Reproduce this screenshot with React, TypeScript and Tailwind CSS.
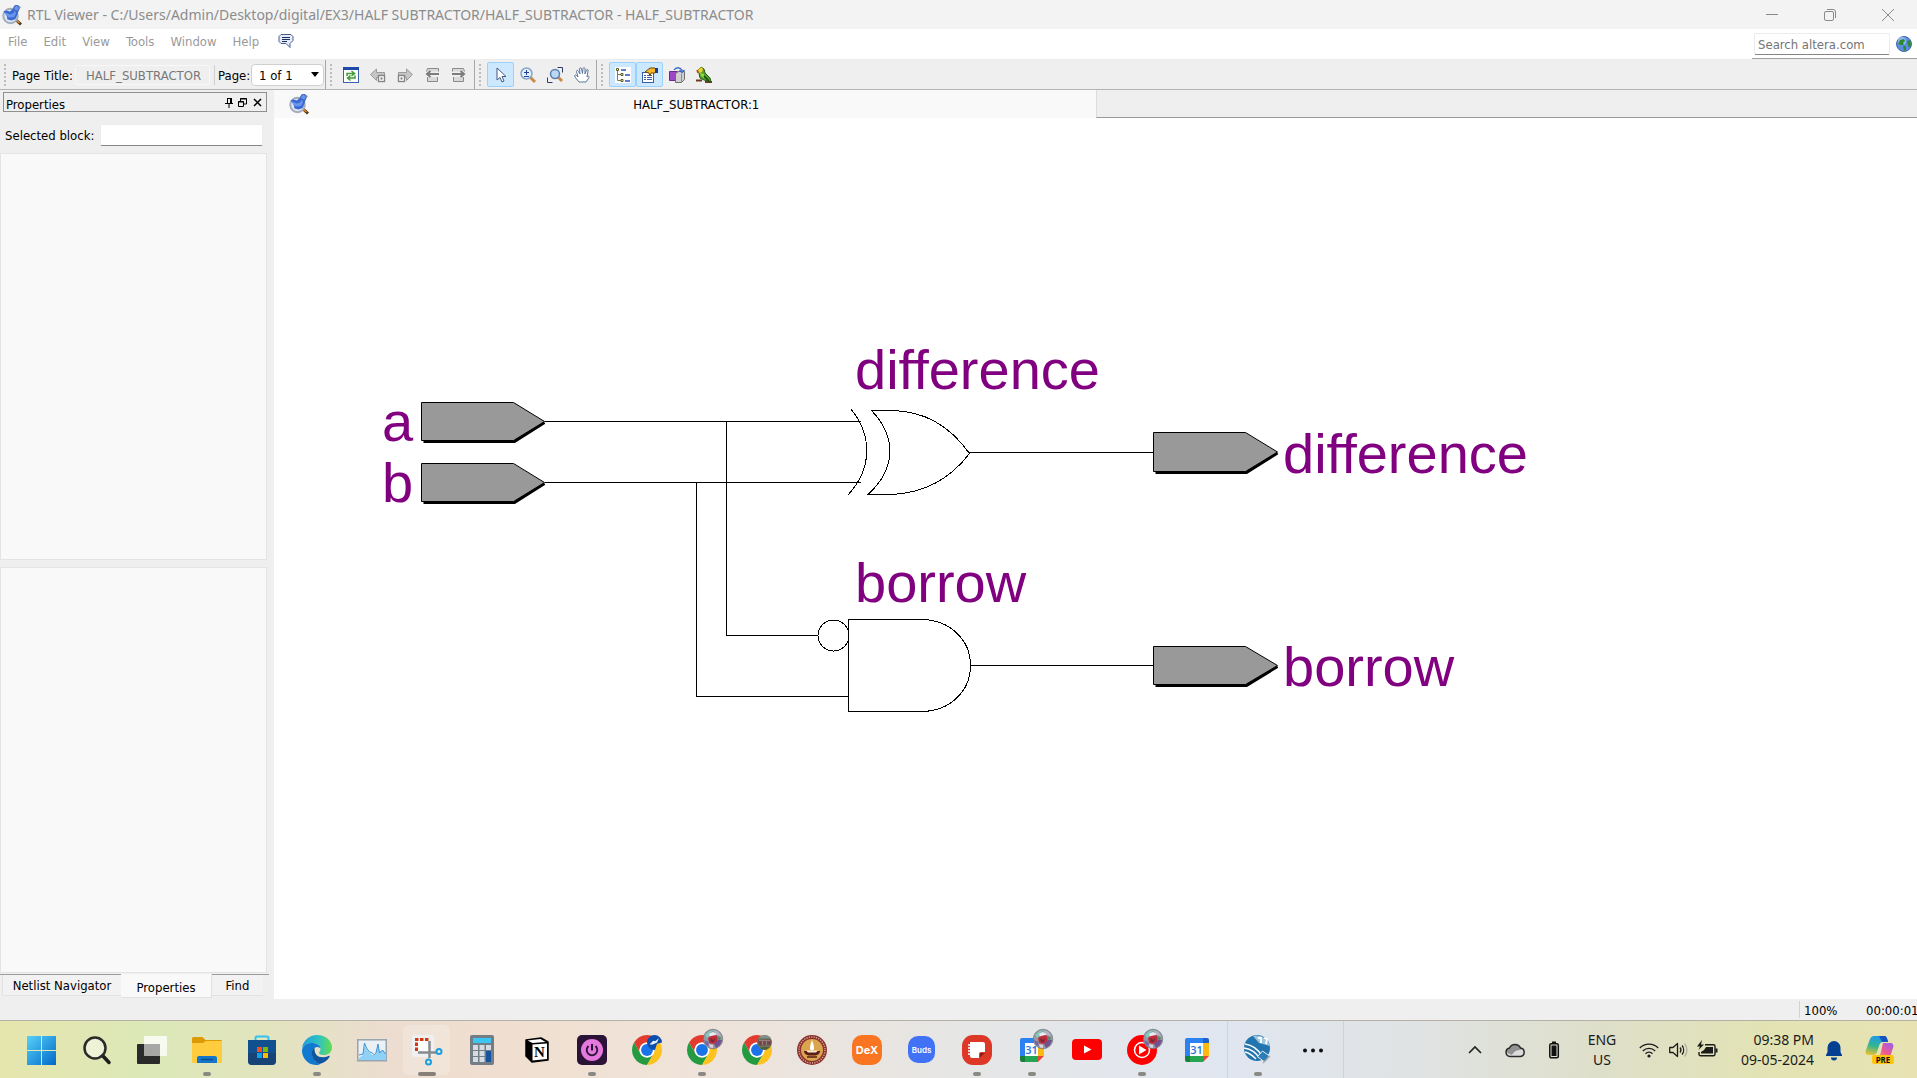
import React from 'react';

type Kids = { children: React.ReactNode };

/* ---------- small shared pieces ---------- */

function Icon({ size = 16, box = 16, children }: Kids & { size?: number; box?: number }) {
  return (
    <svg width={size} height={size} viewBox={`0 0 ${box} ${box}`} fill="none" aria-hidden="true" className="block shrink-0 overflow-visible">
      {children}
    </svg>
  );
}

function ViewerLogo() {
  return (
    <Icon size={20} box={20}>
      <path d="M14 15l5 4.500" stroke="#5a3510" strokeWidth="3" />
      <path d="M13.500 14.500l4 3.500" stroke="#d98a2b" strokeWidth="1.600" />
      <circle cx="8.500" cy="11" r="7.200" fill="#dfe6f1" stroke="#a3adbd" strokeWidth="2" />
      <path d="M1.500 6.500l3 3.500 1 4.500 4 1 4-1.500 2-4.500 1.500-5 1-2-2-2.500-3.500.500-1.500 3-3 3-4-1z" fill="#3a69d3" />
      <path d="M3 7.500l5 2 3-1 2-3 1 3-2 3.500-5 .500-3-2z" fill="#6a96ec" />
      <circle cx="14.500" cy="3.200" r="2.700" fill="#6b93e6" stroke="#4068c2" />
      <path d="M17 1.500l2.500.5-2.500 1.500z" fill="#7d8fae" />
    </Icon>
  );
}

function Grip() {
  return (
    <svg width="3" height="24" aria-hidden="true" className="block shrink-0">
      {[1, 5, 9, 13, 17, 21].map((y) => (
        <rect key={y} x="0" y={y} width="2" height="2" fill="#bdbdbd" />
      ))}
    </svg>
  );
}

function ToolButton({ label, active, children }: Kids & { label: string; active?: boolean }) {
  return (
    <button
      type="button"
      aria-label={label}
      className={
        active
          ? 'flex h-[25px] w-[27px] shrink-0 items-center justify-center rounded-xs border border-[#99d1ff] bg-[#cce8ff]'
          : 'flex h-[25px] w-[27px] shrink-0 items-center justify-center'
      }
    >
      {children}
    </button>
  );
}

/* ---------- window chrome ---------- */

function TitleBar() {
  return (
    <header className="flex h-[29px] shrink-0 items-center bg-[#f3f3f3] pl-[2px]">
      <ViewerLogo />
      <h1 className="ml-[5px] flex-1 font-['Noto_Sans',sans-serif] text-[14px] whitespace-nowrap text-[#8c8c8c]">
        RTL Viewer - C:/Users/Admin/Desktop/digital/EX3/HALF SUBTRACTOR/HALF_SUBTRACTOR - HALF_SUBTRACTOR
      </h1>
      <div className="flex text-[#8a8a8a]">
        <button type="button" aria-label="Minimize" className="flex h-7 w-[58px] items-center justify-center">
          <Icon size={12} box={12}><path d="M0 5.500h12" stroke="currentColor" /></Icon>
        </button>
        <button type="button" aria-label="Restore" className="flex h-7 w-[58px] items-center justify-center">
          <Icon size={12} box={12}>
            <rect x="0.500" y="2.500" width="9" height="9" rx="1.500" stroke="currentColor" />
            <path d="M3 .5h6a2.500 2.500 0 0 1 2.500 2.500v6" stroke="currentColor" />
          </Icon>
        </button>
        <button type="button" aria-label="Close" className="flex h-7 w-[58px] items-center justify-center">
          <Icon size={12} box={12}><path d="M0 0l12 12M12 0L0 12" stroke="currentColor" /></Icon>
        </button>
      </div>
    </header>
  );
}

function MenuBar() {
  return (
    <div className="flex h-[31px] shrink-0 border-b border-[#ececec] bg-white">
      <nav className="flex h-[26px] flex-1 items-center gap-4 pl-2 text-[#9a9a9a]">
        {['File', 'Edit', 'View', 'Tools', 'Window', 'Help'].map((m) => (
          <button key={m} type="button">{m}</button>
        ))}
        <button type="button" aria-label="Feedback" className="ml-[3px] pb-[2px]">
          <Icon>
            <path d="M3 1.500h10l2 2v4l-3 3v4l-4-4H3l-2-2v-5z" fill="#e4ecfb" stroke="#4a5f8a" />
            <path d="M4 4.500h8M4 6.500h8M4 8.500h5" stroke="#1f2f5a" />
          </Icon>
        </button>
      </nav>
      <div className="flex h-[30px] w-[165px] items-center gap-[6px] border-b border-[#a0a0a0] pl-[2px]">
        <input
          aria-label="Search altera.com"
          placeholder="Search altera.com"
          className="h-[22px] w-[136px] rounded-xs border border-[#ececec] border-b-[#868686] bg-white px-[3px] pt-[2px] outline-none placeholder:text-[#757575]"
        />
        <button type="button" aria-label="Search the web">
          <Icon>
            <circle cx="8" cy="8" r="7.500" fill="#5b8ee0" stroke="#4468b0" />
            <circle cx="6" cy="5" r="4" fill="#a9c8f6" opacity=".7" />
            <path d="M2 8l2-4 4-1 1 2-2 2 1 2-3 0zM7 10l3 0 0 4-2 1zM11 5l3-1 1 4-1 4-2-2z" fill="#2f8a2e" />
          </Icon>
        </button>
      </div>
    </div>
  );
}

function ToolBar() {
  return (
    <div className="flex h-[30px] shrink-0 items-stretch border-b border-[#b4b4b4] bg-[#efefef] text-black">
      <div className="flex w-[326px] shrink-0 items-center border-r border-[#a8a8a8] pl-1">
        <Grip />
        <label htmlFor="page-title" className="ml-[5px] w-[63px] pt-[2px] whitespace-nowrap">Page Title:</label>
        <input
          id="page-title"
          readOnly
          value="HALF_SUBTRACTOR"
          className="h-5 w-[135px] min-w-0 rounded-xs border border-[#f8f8f8] bg-transparent pt-[2px] pl-[10px] text-[#787878] outline-none"
        />
        <span className="ml-1 h-5 w-px bg-[#cfcfcf]" />
        <label htmlFor="page" className="ml-[3px] w-[33px] pt-[2px] whitespace-nowrap">Page:</label>
        <span className="relative">
          <select id="page" className="block h-[22px] w-[73px] appearance-none rounded-sm border border-[#d0d0d0] bg-white pt-[2px] pl-[7px] outline-none">
            <option>1 of 1</option>
          </select>
          <span className="pointer-events-none absolute top-[8px] right-[5px]">
            <svg width="8" height="5" aria-hidden="true" className="block"><path d="M0 0h8L4 5z" fill="#000" /></svg>
          </span>
        </span>
      </div>

      <div className="flex w-[149px] shrink-0 items-center border-r border-[#a8a8a8] pl-1">
        <Grip />
        <div className="ml-1 flex w-full items-center">
          <ToolButton label="Refresh">
            <Icon>
              <rect x="0.500" y="0.500" width="15" height="15" fill="#fff" stroke="#3a62ad" />
              <path d="M0 0h16v3H0z" fill="#1d4aa8" />
              <path d="M4 9V6.500h7M8.500 4l3 2.500-3 2.500M12 8.500V11H5M7.500 8.500L4.500 11l3 2.500" stroke="#3f9c35" strokeWidth="1.500" />
            </Icon>
          </ToolButton>
          <ToolButton label="Back">
            <Icon>
              <path d="M0.500 7.500l6-5.500v3.500h8v5h-8v3z" fill="#c6c6c6" stroke="#9b9b9b" />
              <rect x="8.500" y="8.500" width="6" height="6" fill="#fff" stroke="#858585" strokeWidth="1.400" />
              <path d="M10.500 10.500h2v2h-2z" fill="#777" />
            </Icon>
          </ToolButton>
          <ToolButton label="Forward">
            <Icon>
              <path d="M15.500 7.500L9.500 2v3.500h-8v5h8v3z" fill="#c6c6c6" stroke="#9b9b9b" />
              <rect x="1.500" y="8.500" width="6" height="6" fill="#fff" stroke="#858585" strokeWidth="1.400" />
              <path d="M3.500 10.500h2v2h-2z" fill="#777" />
            </Icon>
          </ToolButton>
          <ToolButton label="Previous page">
            <Icon>
              <path d="M2.500 4.500l1-3h11v3M3.500 10v4.500h10V10" fill="#d9d9d9" stroke="#8b8b8b" />
              <path d="M15 7H4M6.500 4L3 7l3.500 3" stroke="#7c7c7c" strokeWidth="2" />
            </Icon>
          </ToolButton>
          <ToolButton label="Next page">
            <Icon>
              <path d="M1.500 4.500v-3h11l1 3M2.500 10v4.500h10V10" fill="#d9d9d9" stroke="#8b8b8b" />
              <path d="M1 7h11M9.500 4L13 7l-3.500 3" stroke="#7c7c7c" strokeWidth="2" />
            </Icon>
          </ToolButton>
        </div>
      </div>

      <div className="flex w-[122px] shrink-0 items-center border-r border-[#a8a8a8] pl-1">
        <Grip />
        <div className="ml-[5px] flex">
          <ToolButton label="Select" active>
            <Icon>
              <path d="M4 1v12l3-2.500 2 4.500 2-1-2-4.500h4z" fill="#fff" stroke="#44597c" />
            </Icon>
          </ToolButton>
          <ToolButton label="Zoom">
            <Icon>
              <path d="M10 10l5 5" stroke="#c98b45" strokeWidth="3" />
              <circle cx="6.500" cy="6.500" r="5.500" fill="#e3eefb" stroke="#86a3cc" strokeWidth="1.500" />
              <path d="M4 5.500h5M6.500 3v5M4 9.500h5" stroke="#1d3f9a" />
            </Icon>
          </ToolButton>
          <ToolButton label="Fit in window">
            <Icon>
              <path d="M10.500.5h5v5M.5 10.500v5h5" stroke="#2b3f66" />
              <path d="M11 10l4 4" stroke="#c98b45" strokeWidth="3" />
              <circle cx="8" cy="7" r="4.500" fill="#bcd6f5" stroke="#5f7fae" strokeWidth="1.500" />
            </Icon>
          </ToolButton>
          <ToolButton label="Pan">
            <Icon>
              <path d="M5 15l-4-5c-1-2 .5-2.500 1.500-1.500L4 10 2.500 4.500c0-1.500 1.500-1.500 2 0L6 7 5.500 2c0-1.500 2-1.500 2 0L8.500 6.500 9 1.500c.5-1.500 2-1 2 .5V7l1.500-4c.5-1 2-.5 1.500 1l-1 6c1-1 2.500-1 2 .5L12 15z" fill="#fff" stroke="#5d779f" />
            </Icon>
          </ToolButton>
        </div>
      </div>

      <div className="flex items-center pl-1">
        <Grip />
        <div className="ml-[5px] flex">
          <ToolButton label="Netlist navigator" active>
            <Icon>
              <path d="M0 0h16v16H0z" fill="#fff" />
              <path d="M2.500 3v10.500H6M2.500 7.500H6" stroke="#7c7c4c" />
              <path d="M1.500 1.500h2v2h-2zM6 6.500h2v2H6zM6 12.500h2v2H6z" fill="#ffd" stroke="#5a5a20" />
              <path d="M6 3h5M10 8h5M10 14h5" stroke="#2c4fc4" strokeWidth="1.500" />
            </Icon>
          </ToolButton>
          <ToolButton label="Properties" active>
            <Icon>
              <rect x="0.500" y="5.500" width="11" height="10" fill="#fff" stroke="#3d5ca8" />
              <path d="M2 8.500h2M5 8.500h5M2 10.500h2M5 10.500h5M2 12.500h2M5 12.500h5" stroke="#3d5ca8" />
              <path d="M3 5l5-4h5l2 2-2 3-4 0-1 3-1-3z" fill="#f5b82a" stroke="#6b4a05" />
              <path d="M13 1h3v5h-3z" fill="#173c8f" />
            </Icon>
          </ToolButton>
          <ToolButton label="Color settings">
            <Icon>
              <path d="M.5 4.500h8v9h-8z" fill="#a048c4" stroke="#6a2a8a" />
              <path d="M6.500 6.500l3-2h6v8l-3 3h-6z" fill="#cfcfcf" stroke="#6e6e6e" />
              <path d="M12.500 7v8" stroke="#8e8e8e" />
              <path d="M5 3c2-3 6-3 8 0v2M10.500 3L13 5.500 15.500 3" stroke="#3a67c8" strokeWidth="1.300" />
            </Icon>
          </ToolButton>
          <ToolButton label="Bird's eye view">
            <Icon>
              <path d="M0 13.500h6M9 15h7" stroke="#6b3b20" strokeWidth="2" />
              <path d="M2 3l3-3 3 2 1 4 5 5 1 4-3-1-4-1-4-2-1-5z" fill="#4fa52f" stroke="#245c14" />
              <path d="M2 3l3-3 2 2-1 3-3 1z" fill="#f5d02d" />
              <path d="M4 6l4 1 0 4-3-2z" fill="#9bd33a" />
              <path d="M8 9l5 5" stroke="#1c4310" strokeWidth="1.500" />
              <path d="M1 3l1 3" stroke="#d23c1e" strokeWidth="1.500" />
            </Icon>
          </ToolButton>
        </div>
      </div>
    </div>
  );
}

/* ---------- side panel ---------- */

function PropertiesPanel() {
  return (
    <aside className="flex w-[274px] shrink-0 flex-col bg-[#efefef]">
      <div className="mt-[2px] ml-[3px] flex h-5 w-[264px] shrink-0 items-center border border-[#8f8f8f] pr-1 pl-[2px]">
        <h2 className="flex-1 pt-[6px]">Properties</h2>
        <div className="flex gap-[5px]">
          <button type="button" aria-label="Pin">
            <Icon size={8} box={8}><path d="M2.500 0v5M2 .5h5M0 5.500h8M5.500 0v5M6.500 0v5M4 6v4" stroke="#000" /></Icon>
          </button>
          <button type="button" aria-label="Float">
            <Icon size={9} box={9}>
              <path d="M2.500 3V.5h6V6H6M2 1h7" stroke="#000" />
              <path d="M.5 3.500h5v5h-5zM0 4h6" stroke="#000" />
            </Icon>
          </button>
          <button type="button" aria-label="Close panel" className="ml-px">
            <Icon size={9} box={9}><path d="M1 1l7 7M8 1L1 8" stroke="#000" strokeWidth="1.500" /></Icon>
          </button>
        </div>
      </div>
      <div className="mt-3 flex h-[22px] shrink-0 items-center pr-[11px] pl-[5px]">
        <label htmlFor="selected-block" className="w-[95px] pt-[2px] whitespace-nowrap">Selected block:</label>
        <input id="selected-block" className="h-[22px] min-w-0 flex-1 rounded-xs border border-[#ececec] border-b-[#868686] bg-white px-1 outline-none" />
      </div>
      <div className="mt-[7px] mr-[7px] flex-1 border border-[#e4e4e4] bg-[#f9f9f9]" />
      <div className="mt-[7px] mr-[7px] flex-1 border border-[#e4e4e4] bg-[#f9f9f9]" />
      <div role="tablist" className="mt-px mr-[5px] mb-px flex h-6 shrink-0 items-start border-t border-[#9c9c9c]">
        <button role="tab" type="button" aria-selected="false" className="ml-[2px] h-[21px] w-[119px] border-b border-l border-[#e2e2e2] bg-[#f2f2f2] pt-[2px]">Netlist Navigator</button>
        <button role="tab" type="button" aria-selected="true" className="-mt-px h-[24px] w-[91px] border-r border-b border-[#e2e2e2] bg-[#f9f9f9] pt-1">Properties</button>
        <button role="tab" type="button" aria-selected="false" className="h-[21px] w-[51px] border-b border-[#e2e2e2] bg-[#f2f2f2] pt-[2px]">Find</button>
      </div>
    </aside>
  );
}

/* ---------- schematic ---------- */

function Pin({ x, y, w, h }: { x: number; y: number; w: number; h: number }) {
  const shoulder = Math.round(w * 0.745);
  const mid = h / 2;
  return (
    <g transform={`translate(${x} ${y})`}>
      <path d={`M2 ${h + 1}H${shoulder + 1}L${w} ${mid + 1}`} fill="none" stroke="#000" strokeWidth="3" />
      <path d={`M0 0H${shoulder}L${w} ${mid}L${shoulder} ${h}H0Z`} fill="#999" stroke="#000" />
    </g>
  );
}

function Schematic() {
  return (
    <svg role="img" aria-label="Half subtractor schematic" className="block h-full w-full bg-white">
      <g stroke="#000" fill="none" shapeRendering="crispEdges">
        <path d="M271 303.500H587M271 364.500H587M452.500 303V517.500H544M422.500 364V578.500H574M695 334.500H879M696 547.500H879" />
      </g>
      <g stroke="#000" fill="none" shapeRendering="crispEdges">
        <path d="M577 291C598 317 599 350 574 377" />
        <path d="M597.500 292.500C622 318 623 350 594 376.500H618C650 375 676 361 695.500 335.500C676 308 650 293 618 292.500Z" />
        <path d="M574.500 501.500H647C676 501.500 696.500 522 696.500 547.500S676 593.500 647 593.500H574.500Z" />
        <circle cx="559.500" cy="517.500" r="15.500" />
      </g>
      <Pin x={147.500} y={284.500} w={123} h={38} />
      <Pin x={147.500} y={345.500} w={123} h={38} />
      <Pin x={879.500} y={314.500} w={124} h={39} />
      <Pin x={879.500} y={528.500} w={124} h={38} />
      <g fill="#800080" fontFamily="'Liberation Sans', Arial, sans-serif" fontSize="56">
        <text x="108" y="323">a</text>
        <text x="108" y="384">b</text>
        <text x="581" y="271">difference</text>
        <text x="581" y="484">borrow</text>
        <text x="1009" y="355">difference</text>
        <text x="1009" y="568">borrow</text>
      </g>
    </svg>
  );
}

function Workspace() {
  return (
    <main className="flex min-w-0 flex-1 flex-col">
      <div role="tablist" className="flex h-[28px] shrink-0">
        <button role="tab" type="button" aria-selected="true" className="flex w-1/2 items-center bg-[#f9f9f9] pr-3 pb-px pl-[15px]">
          <ViewerLogo />
          <span className="flex-1 pt-[3px]">HALF_SUBTRACTOR:1</span>
        </button>
        <div className="flex-1 border-b border-l border-[#999] border-l-[#dcdcdc] bg-[#efefef]" />
      </div>
      <div className="min-h-0 flex-1">
        <Schematic />
      </div>
    </main>
  );
}

function StatusBar() {
  return (
    <div className="flex h-[21px] shrink-0 items-center justify-end bg-[#efefef] whitespace-nowrap">
      <span className="flex h-[17px] w-[67px] items-center border-l border-[#d2d2d2] pt-[2px] pl-1">100%</span>
      <span className="w-[51px] pt-[2px]">00:00:01</span>
    </div>
  );
}

/* ---------- taskbar ---------- */

function Chrome({ children }: { children?: React.ReactNode }) {
  return (
    <Icon size={30} box={48}>
      <path d="M24 12h20.780A24 24 0 0 0 3.220 12L13.600 30A12 12 0 0 1 24 12z" fill="#e33b2e" />
      <path d="M3.220 12A24 24 0 0 0 24 48L34.390 30A12 12 0 0 1 13.600 30z" fill="#249a41" />
      <path d="M44.780 12A24 24 0 0 1 24 48L34.390 30A12 12 0 0 0 24 12z" fill="#fcc31e" />
      <circle cx="24" cy="24" r="12" fill="#fff" />
      <circle cx="24" cy="24" r="9.500" fill="#1a73e8" />
      {children}
    </Icon>
  );
}

/* Profile picture shown over an app icon; drawn in a 30-unit box. */
function Avatar() {
  return (
    <g>
      <circle cx="26" cy="4" r="9.800" fill="#8f9aa3" stroke="#666c70" strokeWidth=".6" />
      <path d="M18 0l4-4 4-1-2 5-4 3z" fill="#86c4ba" />
      <path d="M26-5l5 1.500L34.500 1l-5-1z" fill="#b9b3c4" />
      <path d="M22-1l4-2 3 1.500v2l-6 1z" fill="#e9edf0" />
      <path d="M21 3l3-2 5-1 2 3-1 5-4 1-4-1z" fill="#c42a38" />
      <path d="M23 3l3 2 2-2-1 4-3 0z" fill="#5d3340" />
      <path d="M17 5l4 2 1 4-3-1z" fill="#7d5fa0" />
      <path d="M27 9l4-4 4 0-2 5-4 3z" fill="#72508f" />
      <path d="M22 9l4 1 0 3-3-.5z" fill="#d9cfdd" />
      <path d="M30 1l4 2-1 2-3-1z" fill="#5e7f68" />
    </g>
  );
}

function Calendar({ children }: { children?: React.ReactNode }) {
  return (
    <Icon size={30} box={30}>
      <path d="M3 5a2 2 0 0 1 2-2h16v5H8v13H3z" fill="#2c82f0" />
      <path d="M21 3h4a2 2 0 0 1 2 2v3h-6z" fill="#1c62cf" />
      <path d="M21 8h6v13h-6z" fill="#fbb912" />
      <path d="M3 21h5v6H5a2 2 0 0 1-2-2z" fill="#17803c" />
      <path d="M8 21h13v6H8z" fill="#24a550" />
      <path d="M21 21h6l-6 6z" fill="#ea4535" />
      <path d="M8 8h13v13H8z" fill="#fff" />
      <text x="14.500" y="19" textAnchor="middle" fontSize="11" fontWeight="600" fontFamily="'Open Sans', sans-serif" fill="#2673e0">31</text>
      {children}
    </Icon>
  );
}

const apps: { name: string; run?: boolean; focus?: boolean; icon: React.ReactNode }[] = [
  {
    name: 'Start',
    icon: (
      <Icon size={30} box={30}>
        <defs>
          <linearGradient id="win" x1="0" y1="0" x2="30" y2="30" gradientUnits="userSpaceOnUse">
            <stop stopColor="#57d3fa" /><stop offset="1" stopColor="#0067c8" />
          </linearGradient>
        </defs>
        <path d="M0 1h14v14H0zM15 1h14v14H15zM0 16h14v14H0zM15 16h14v14H15z" fill="url(#win)" />
      </Icon>
    ),
  },
  {
    name: 'Search',
    icon: (
      <Icon size={30} box={30}>
        <path d="M20.500 20.500l6.500 7" stroke="#1d1d1d" strokeWidth="3.500" strokeLinecap="round" />
        <circle cx="13" cy="13" r="10.500" fill="#fff" fillOpacity=".45" stroke="#2a2a2a" strokeWidth="2.500" />
      </Icon>
    ),
  },
  {
    name: 'Task view',
    icon: (
      <Icon size={30} box={30}>
        <rect x="0" y="9" width="23" height="20" rx="1" fill="#2a2a2a" />
        <rect x="7" y="1" width="23" height="20" rx="1" fill="#fff" fillOpacity=".78" />
        <path d="M7 9h16v12H8a1 1 0 0 1-1-1z" fill="#8c8c88" fillOpacity=".6" />
      </Icon>
    ),
  },
  {
    name: 'File Explorer',
    run: true,
    icon: (
      <Icon size={30} box={30}>
        <path d="M0 3.500A1.500 1.500 0 0 1 1.500 2h9l3 3H29a1 1 0 0 1 1 1v5H0z" fill="#dd9a06" />
        <path d="M0 8h11l3-2h16v21a1 1 0 0 1-1 1H1a1 1 0 0 1-1-1z" fill="#ffcc3d" />
        <path d="M5 28v-5a2 2 0 0 1 2-2h16a2 2 0 0 1 2 2v5z" fill="#1577c9" />
        <path d="M9 24.500h12" stroke="#0b4e8e" strokeWidth="1.500" />
      </Icon>
    ),
  },
  {
    name: 'Microsoft Store',
    icon: (
      <Icon size={30} box={30}>
        <path d="M8.500 6V3A1.500 1.500 0 0 1 10 1.500h10A1.500 1.500 0 0 1 21.500 3v3" stroke="#2ec3f4" strokeWidth="2" />
        <path d="M1 5h28v21a4 4 0 0 1-4 4H5a4 4 0 0 1-4-4z" fill="#10508f" />
        <path d="M1 18h28v8a4 4 0 0 1-4 4H5a4 4 0 0 1-4-4z" fill="#1d3a68" opacity=".6" />
        <path d="M10 12h5v5h-5z" fill="#f25022" /><path d="M16 12h5v5h-5z" fill="#7fba00" />
        <path d="M10 18h5v5h-5z" fill="#00a4ef" /><path d="M16 18h5v5h-5z" fill="#ffb900" />
      </Icon>
    ),
  },
  {
    name: 'Microsoft Edge',
    run: true,
    icon: (
      <Icon size={30} box={30}>
        <defs>
          <linearGradient id="edgeTop" x1="0" y1="10" x2="30" y2="12" gradientUnits="userSpaceOnUse">
            <stop stopColor="#1d9fe0" /><stop offset=".55" stopColor="#2fc3c0" /><stop offset="1" stopColor="#66dc4e" />
          </linearGradient>
        </defs>
        <path d="M0 14A15 15 0 0 1 15 0c9 0 15 6 15 12.500 0 5-4 7.500-8 7.500-3 0-5-1-5-2s1.500-1.500 1.500-4C18.500 10.500 15 8 11 8 5 8 1 11 0 14z" fill="url(#edgeTop)" />
        <path d="M0 15C1 10.500 5 8 10 8c5 0 8.500 2.500 8.500 6 0-1-1.500-2-3-2-4 0-6.500 4-5 9 1 4 4 7 8 8-2 1-3.500 1-5 1A14.500 14.500 0 0 1 0 15z" fill="#1279d0" />
        <path d="M12.500 12.500c-5 3-3 13.500 5 16.500 4-1 8-3.500 10-7 .5-1-.3-1.500-1-1-5 2.500-11 1.500-13-2.500-1-2-1-4-1-6z" fill="#0f559f" />
      </Icon>
    ),
  },
  {
    name: 'Resource Monitor',
    icon: (
      <Icon size={30} box={30}>
        <rect x="0.750" y="4.750" width="28.500" height="21" fill="#eaf0f4" stroke="#98a4ae" strokeWidth="1.500" />
        <path d="M2 23l4-3 1.500-9 2 3 2 3 4 3 2 0 1.500 0L21 9l1.500 8 3-2 3 4v6H2z" fill="#8fd0f7" />
        <path d="M2 20l4-1 1.500-11 2 5 3 4 3 1 2 2 1.500-2L21 9l1.500 9 3-3 3 4" stroke="#3b93d2" />
      </Icon>
    ),
  },
  {
    name: 'Snipping Tool',
    run: true,
    focus: true,
    icon: (
      <Icon size={30} box={30}>
        <rect x="0" y="0" width="22" height="22" rx="2" fill="#eef0f2" />
        <path d="M4.500 16V4.500H18" stroke="#cf3a12" strokeWidth="3" strokeDasharray="3.500 1.500" />
        <path d="M6 6h11v11H6z" fill="#fff" />
        <path d="M17.500 6v17M6 17.500h18" stroke="#868b8f" strokeWidth="2.500" />
        <circle cx="27" cy="16.500" r="2.500" stroke="#189fe0" strokeWidth="2" />
        <circle cx="16.500" cy="27" r="2.500" stroke="#189fe0" strokeWidth="2" />
      </Icon>
    ),
  },
  {
    name: 'Calculator',
    icon: (
      <Icon size={30} box={30}>
        <rect x="3" y="0" width="24" height="30" rx="2" fill="#737d86" />
        <path d="M6 3h18v5H6z" fill="#3cc7f3" />
        <path d="M6 10h5v5H6zM12.500 10h5v5h-5zM19 10h5v5h-5zM6 16h5v5H6zM12.500 16h5v5h-5zM6 22h5v5H6zM12.500 22h5v5h-5z" fill="#d5dbe0" />
        <path d="M19 16h5v11h-5z" fill="#1553a0" />
      </Icon>
    ),
  },
  {
    name: 'Notion',
    icon: (
      <Icon size={30} box={30}>
        <path d="M4 5l15-2 7 4v18l-16 2-6-6z" fill="#000" stroke="#000" strokeWidth="1.500" strokeLinejoin="round" />
        <path d="M5.500 5.500l13-1.500 5 3-13 1z" fill="#fff" />
        <path d="M10.500 9.500l14.500-1v15.500l-14.500 1.500z" fill="#fff" />
        <text x="17.500" y="22" textAnchor="middle" fontSize="15" fontWeight="700" fontFamily="'Liberation Serif', serif" fill="#000">N</text>
      </Icon>
    ),
  },
  {
    name: 'Power',
    run: true,
    icon: (
      <Icon size={30} box={30}>
        <rect width="30" height="30" rx="5" fill="#2b1338" />
        <circle cx="15" cy="15" r="11" fill="#e478dc" />
        <path d="M15 9v6.500" stroke="#2b1338" strokeWidth="2" />
        <path d="M11.500 11a5.300 5.300 0 1 0 7 0" stroke="#2b1338" strokeWidth="1.800" />
      </Icon>
    ),
  },
  {
    name: 'Chrome profile 1',
    icon: (
      <Chrome>
        <path d="M24 12a12 12 0 0 1 24 0l-8 2-3 9-1 1a12 12 0 0 1-12-12z" fill="#0b4fae" />
        <path d="M28 15l6-6 3 1 6-5-3 7-7 3z" fill="#e8f0fa" />
      </Chrome>
    ),
  },
  { name: 'Chrome profile 2', run: true, icon: <Chrome><g transform="scale(1.6)"><Avatar /></g></Chrome> },
  {
    name: 'Chrome profile 3',
    icon: (
      <Chrome>
        <circle cx="36" cy="12" r="12" fill="#6d7560" />
        <path d="M26 5c5-6 16-6 20 0z" fill="#7f918a" />
        <path d="M26 8l20-1v9l-19 1z" fill="#74454a" />
        <path d="M27 9h18M33 10v6M39 10v6" stroke="#a08c88" strokeWidth="1.500" />
        <path d="M28 20l16-1-5 4h-6z" fill="#4d5d3c" />
      </Chrome>
    ),
  },
  {
    name: 'Institute portal',
    icon: (
      <Icon size={30} box={30}>
        <circle cx="15" cy="15" r="15" fill="#8a2f2a" />
        <circle cx="15" cy="15" r="13" stroke="#d6a69c" strokeWidth="1.500" strokeDasharray="1.200 1.200" />
        <circle cx="15" cy="15" r="11" fill="#dba54d" />
        <path d="M7 16h16c0 3-3 4.500-6 4.500H13c-3 0-6-1.500-6-4.500z" fill="#5d1b19" />
        <path d="M9 15.500h12l-2 2h-8z" fill="#f7ead2" />
        <path d="M10 22h10" stroke="#5d1b19" strokeWidth="1.500" />
        <path d="M15 5c1.500 4 2 6 2 8.500a2 2 0 0 1-4 0c0-2.500.5-4.500 2-8.500z" fill="#fff" />
      </Icon>
    ),
  },
  {
    name: 'Samsung DeX',
    icon: (
      <Icon size={30} box={30}>
        <rect width="30" height="30" rx="10" fill="#f97521" />
        <text x="15" y="19" textAnchor="middle" fontSize="11" fontWeight="700" fontFamily="Inter, sans-serif" fill="#fff">DeX</text>
      </Icon>
    ),
  },
  {
    name: 'Galaxy Buds',
    icon: (
      <Icon size={30} box={30}>
        <rect x="1" y="1" width="27" height="27" rx="10" fill="#4171f5" />
        <text x="14.500" y="17.500" textAnchor="middle" fontSize="8" fontWeight="600" fontFamily="Inter, sans-serif" fill="#fff">Buds</text>
      </Icon>
    ),
  },
  {
    name: 'Samsung Notes',
    run: true,
    icon: (
      <Icon size={30} box={30}>
        <rect width="30" height="30" rx="11" fill="#dc3727" />
        <path d="M8 7h13a2 2 0 0 1 2 2v8h-4a2 2 0 0 0-2 2v4H10a2 2 0 0 1-2-2z" fill="#fff" />
        <path d="M18 22.500V19a1 1 0 0 1 1-1h4z" fill="#8d1e16" />
        <path d="M6 10h3M6 13h3M6 16h3M6 19h3" stroke="#fff" strokeWidth="1.500" />
      </Icon>
    ),
  },
  { name: 'Calendar profile 2', run: true, icon: <Calendar><Avatar /></Calendar> },
  {
    name: 'YouTube',
    icon: (
      <Icon size={30} box={30}>
        <rect x="0" y="4" width="30" height="21" rx="4" fill="#f00" />
        <path d="M12 10.500v8l7.500-4z" fill="#fff" />
      </Icon>
    ),
  },
  {
    name: 'YouTube Music',
    run: true,
    icon: (
      <Icon size={30} box={30}>
        <circle cx="15" cy="15" r="15" fill="#f00" />
        <circle cx="15" cy="15" r="7.500" stroke="#fff" strokeWidth="1.500" />
        <path d="M12 10.500v9l7.500-4.500z" fill="#fff" />
        <Avatar />
      </Icon>
    ),
  },
  { name: 'Calendar', icon: <Calendar /> },
];

function Running({ wide }: { wide?: boolean }) {
  return (
    <span
      className={
        wide
          ? 'absolute bottom-[1px] left-1/2 h-1 w-[18px] -translate-x-1/2 rounded-full bg-[#87807a]'
          : 'absolute bottom-[1px] left-1/2 h-1 w-2 -translate-x-1/2 rounded-full bg-[#8a8984]'
      }
    />
  );
}

function Taskbar() {
  return (
    <footer className="flex h-[58px] shrink-0 items-center border-t border-[#b5b1a6] bg-linear-[90deg,#e6e6ae_0%,#dce8b8_8%,#e2e4be_14%,#ecddd0_20%,#f0dfd0_26%,#efe3d9_36%,#e6e6e5_50%,#e0e6f0_64%,#e0e3e3_74%,#dedfcb_83%,#e2e3b4_92%,#e8e2b2_100%] pl-[14px] text-[#1b1b1b]">
      {apps.map((a) => (
        <button
          key={a.name}
          type="button"
          aria-label={a.name}
          className="relative flex h-[54px] w-[55px] shrink-0 items-center justify-center"
        >
          {a.focus && <span className="absolute inset-x-1 inset-y-0.5 rounded-md bg-white/20" />}
          <span className="relative">{a.icon}</span>
          {a.run && <Running wide={a.focus} />}
        </button>
      ))}
      <div className="ml-[3px] flex h-full shrink-0 items-center border-x border-[#cdd2db] pr-[3px] pl-[2px]">
        <button type="button" aria-label="Quartus" className="relative flex h-[54px] w-[55px] items-center justify-center">
          <Icon size={30} box={30}>
            <circle cx="14" cy="13" r="13" fill="#2274ae" />
            <path d="M10 1c8-2 15 3 17 10L16 8z" fill="#9cc6e0" />
            <path d="M2 9c7 1 13 5 17 12M1 13c6 1 12 4 15 10M2 17c5 1 8 4 11 7" stroke="#fff" strokeWidth="1.400" />
            <path d="M15 3l3 0 0 5M21 3l3 1-1 5" stroke="#fff" strokeWidth="1.800" />
            <path d="M14.500 21.500l5-5.500 7 5-5 6z" fill="#2b7fb6" stroke="#e9eef2" />
            <path d="M20 28l7-7" stroke="#a9a9a9" strokeWidth="1.500" />
          </Icon>
          <Running />
        </button>
        <button type="button" aria-label="More apps" className="flex h-[54px] w-[55px] items-center justify-center">
          <Icon size={20} box={20}>
            <circle cx="2" cy="10.500" r="2" fill="#111" /><circle cx="10" cy="10.500" r="2" fill="#111" /><circle cx="18" cy="10.500" r="2" fill="#111" />
          </Icon>
        </button>
      </div>

      <div className="ml-auto flex shrink-0 items-center pr-[22px] font-['Noto_Sans',sans-serif] text-[14px] leading-5">
        <button type="button" aria-label="Show hidden icons">
          <Icon size={14} box={14}><path d="M1 10l6-6 6 6" stroke="#222" strokeWidth="1.600" /></Icon>
        </button>
        <button type="button" aria-label="OneDrive" className="ml-[23px]">
          <Icon size={20} box={20}>
            <path d="M5 16.500a4.300 4.300 0 0 1-.5-8.500A6 6 0 0 1 15.500 8a4.300 4.300 0 0 1 0 8.500z" fill="#dcdcdc" />
            <path d="M1 12c1-4 4-4 4-4 2-4.500 9-4 10.500 0l2 1-7 2-4 4z" fill="#929292" />
            <path d="M5 16.500a4.300 4.300 0 0 1-.5-8.500A6 6 0 0 1 15.500 8a4.300 4.300 0 0 1 0 8.500z" stroke="#2b2b2b" strokeWidth="1.500" />
          </Icon>
        </button>
        <button type="button" aria-label="Device battery" className="ml-[21px]">
          <Icon size={16} box={16}>
            <rect x="3.800" y="1.800" width="8.500" height="14" rx="1.500" stroke="#111" strokeWidth="1.500" />
            <path d="M6 .5h4" stroke="#111" strokeWidth="2" />
            <path d="M5.500 3.500h5v10.500h-5z" fill="#111" />
          </Icon>
        </button>
        <button type="button" className="ml-[22px] w-9 text-center">ENG<br />US</button>
        <button type="button" aria-label="Network, volume and battery" className="ml-[19px] flex items-center gap-[9px]">
          <Icon size={20} box={20}>
            <path d="M.8 8a13 13 0 0 1 18.400 0M3.800 11a8.800 8.800 0 0 1 12.400 0M6.500 13.700a5 5 0 0 1 7 0" stroke="#1b1b1b" strokeWidth="1.300" />
            <circle cx="10" cy="16" r="1.600" fill="#1b1b1b" />
          </Icon>
          <Icon size={20} box={20}>
            <path d="M1.700 7.500H5l4.500-4v13l-4.500-4H1.700z" stroke="#1b1b1b" strokeWidth="1.300" strokeLinejoin="round" />
            <path d="M12 7.500a4 4 0 0 1 0 5M14 5.500a7 7 0 0 1 0 9" stroke="#1b1b1b" strokeWidth="1.300" />
            <path d="M16.500 3.500a10 10 0 0 1 0 13" stroke="#b0b0a4" strokeWidth="1.300" />
          </Icon>
          <Icon size={20} box={20}>
            <path d="M8 4.800h8.500a1.500 1.500 0 0 1 1.500 1.500v8a1.500 1.500 0 0 1-1.500 1.500h-13a1.500 1.500 0 0 1-1.500-1.500V12" stroke="#1b1b1b" strokeWidth="1.400" />
            <path d="M9 7h7v6.500H4V12l3-2z" fill="#1b1b1b" />
            <path d="M19.500 8.500v4" stroke="#1b1b1b" strokeWidth="2" />
            <path d="M5 0L0 6.500h3L1.500 10 7 4.500H4z" fill="#1b1b1b" />
          </Icon>
        </button>
        <button type="button" className="ml-[13px] w-[84px] text-right whitespace-nowrap">09:38 PM<br />09-05-2024</button>
        <button type="button" aria-label="Notifications" className="ml-[10px]">
          <Icon size={20} box={20}>
            <path d="M10 1a6.500 6.500 0 0 1 6.500 6.500V12l1.500 3v1H2v-1l1.500-3V7.500A6.500 6.500 0 0 1 10 1z" fill="#053f91" />
            <path d="M7 17.500h6a3 3 0 0 1-6 0z" fill="#053f91" />
          </Icon>
        </button>
        <button type="button" aria-label="Copilot" className="ml-[21px]">
          <Icon size={30} box={30}>
            <defs>
              <linearGradient id="copA" x1="8" y1="1" x2="4" y2="20" gradientUnits="userSpaceOnUse">
                <stop stopColor="#1f9be8" /><stop offset=".5" stopColor="#35b58f" /><stop offset="1" stopColor="#f3c12c" />
              </linearGradient>
              <linearGradient id="copB" x1="26" y1="8" x2="16" y2="24" gradientUnits="userSpaceOnUse">
                <stop stopColor="#a35bea" /><stop offset=".6" stopColor="#ee5b8b" /><stop offset="1" stopColor="#f9a05b" />
              </linearGradient>
            </defs>
            <path d="M9 1h10c2 0 3 1 4 6h-5c-2 0-3 1-4 4l-2 6c-1 2-2 3-4 3H4c-3 0-4-2-3-5L5 4c1-2 2-3 4-3z" fill="url(#copA)" />
            <path d="M14 1h5c2 0 3 1 4 6h-6z" fill="#1553c0" />
            <path d="M18 8h7c3 0 4 2 3 5l-3 9H11c3 0 4-2 5-5z" fill="url(#copB)" />
            <rect x="7" y="20" width="22" height="9" rx="2" fill="#ffc40c" />
            <text x="18" y="27.500" textAnchor="middle" fontSize="8" fontWeight="700" fontFamily="'Noto Sans', sans-serif" fill="#111">PRE</text>
          </Icon>
        </button>
      </div>
    </footer>
  );
}

export default function App() {
  return (
    <div className="flex h-screen flex-col overflow-hidden bg-[#efefef] font-['DejaVu_Sans_Condensed','Noto_Sans',sans-serif] text-[13px] leading-4 text-black">
      <TitleBar />
      <MenuBar />
      <ToolBar />
      <div className="flex min-h-0 flex-1">
        <PropertiesPanel />
        <Workspace />
      </div>
      <StatusBar />
      <Taskbar />
    </div>
  );
}
